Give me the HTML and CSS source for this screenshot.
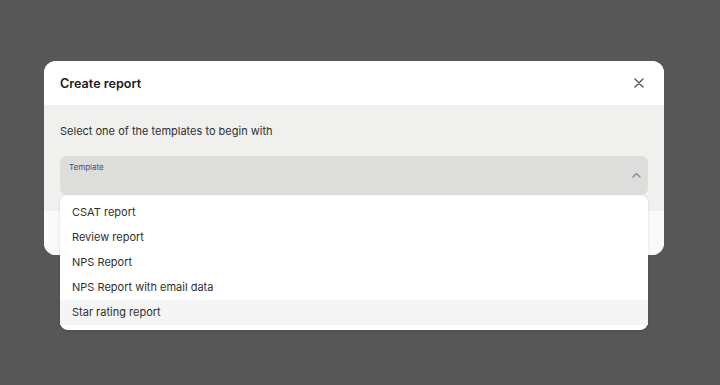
FILE: index.html
```html
<!DOCTYPE html>
<html lang="en">
<head>
<meta charset="UTF-8" />
<title>Create report</title>
<meta name="viewport" content="width=device-width, initial-scale=1" />
<link rel="stylesheet" href="styles.css">
</head>
<body>

<div class="modal">
  <div class="modal-header">
    <h2 class="modal-title">Create report</h2>
    <button class="close-btn" aria-label="Close">
      <svg width="10" height="10" viewBox="0 0 10 10"><path d="M1 1L9 9M9 1L1 9" stroke="#5c5c5c" stroke-width="1.5" stroke-linecap="round"/></svg>
    </button>
  </div>

  <div class="modal-body">
    <p class="intro">Select one of the templates to begin with</p>
    <div class="select-wrap">
      <div class="select-field">
        <span class="select-label">Template</span>
        <svg class="chevron" width="9" height="6" viewBox="0 0 9 6"><path d="M1 5L4.5 1.5L8 5" fill="none" stroke="#8a8a8a" stroke-width="1.4" stroke-linecap="round" stroke-linejoin="round"/></svg>
      </div>
      <!-- open listbox -->
      <ul class="options">
        <li>CSAT report</li>
        <li>Review report</li>
        <li>NPS Report</li>
        <li>NPS Report with email data</li>
        <li class="active">Star rating report</li>
      </ul>
    </div>
  </div>

  <div class="modal-footer"></div>
</div>

</body>
</html>
```

FILE: styles.css
```css
body { font-family: Inter, "Liberation Sans", sans-serif; background: #575757; margin: 0; padding: 61px 0 0 44px; height: 385px; box-sizing: border-box; overflow: hidden; }
.modal { width: 620px; background: #fff; border-radius: 12px; overflow: visible; }
.modal-header { height: 44px; display: flex; align-items: center; justify-content: space-between; padding: 0 20px 0 16px; background: #fff; border-radius: 12px 12px 0 0; }
.modal-title { margin: 0; font-size: 12.6px; font-weight: 600; color: #202020; }
.close-btn { background: none; border: none; padding: 0; width: 10px; height: 10px; display: flex; cursor: pointer; }
.modal-body { background: #f0f0ef; padding: 18px 16px 16px; }
.intro { margin: 0 0 17px; font-size: 11px; color: #2f2f2f; line-height: 16px; }
.select-wrap { position: relative; }
.select-field { height: 39px; background: #dddddc; border-radius: 7px; position: relative; }
.select-label { position: absolute; left: 9px; top: 6px; font-size: 8px; color: #3d4f80; }
.chevron { position: absolute; right: 7px; top: 16px; }
.options { position: absolute; left: 0; right: 0; top: 39px; margin: 0; padding: 5px 0 5px; list-style: none; background: #fff; border-radius: 8px; box-shadow: 0 1px 3px rgba(0,0,0,0.12); z-index: 10; }
.options li { height: 25px; line-height: 24px; padding: 0 12px; font-size: 11px; color: #2f2f2f; }
.options li.active { background: #f5f5f5; }
.modal-footer { height: 44px; background: #fafafa; border-radius: 0 0 12px 12px; }
```
